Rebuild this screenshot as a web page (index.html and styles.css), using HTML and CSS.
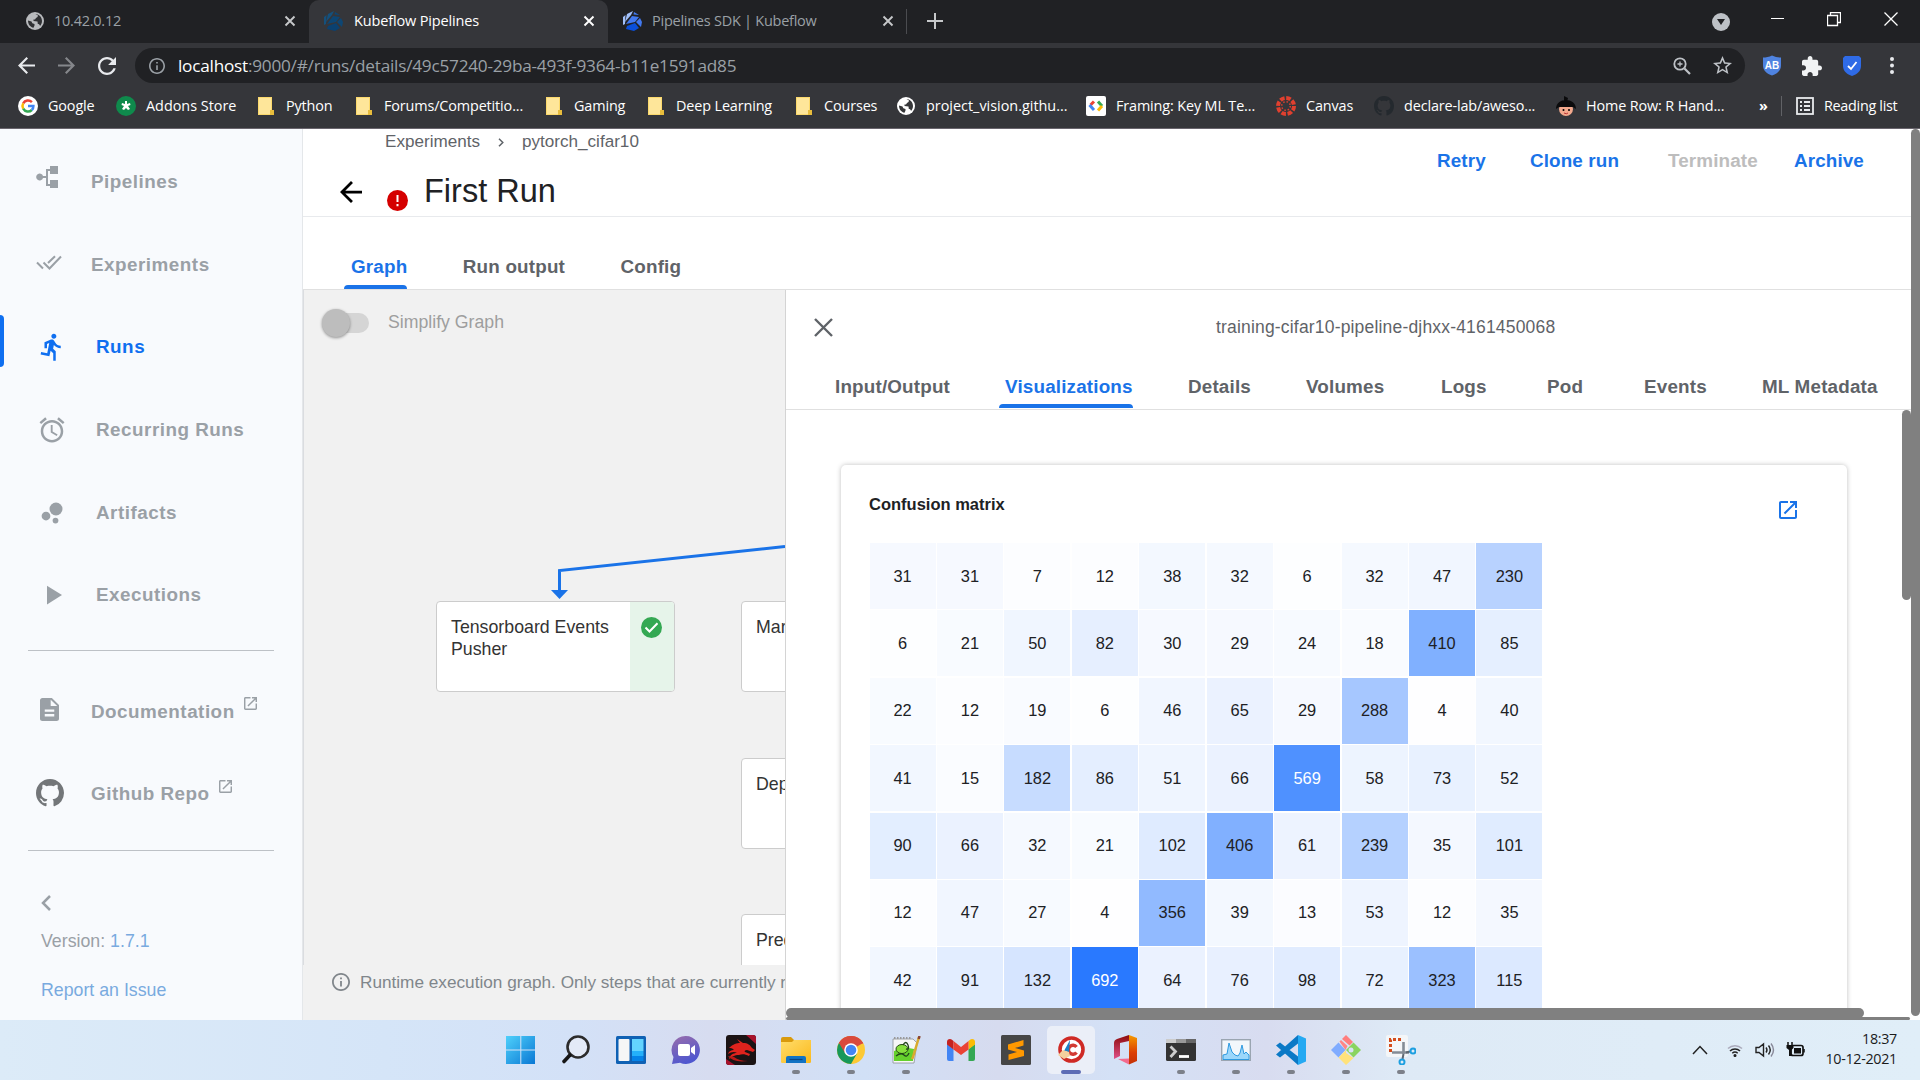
FILE: index.html
```html
<!DOCTYPE html>
<html lang="en">
<head>
<meta charset="utf-8">
<title>Kubeflow Pipelines</title>
<link rel="stylesheet" href="styles.css">
</head>
<body>
<svg class="defs" width="0" height="0">
  <defs>
    <symbol id="x" viewBox="0 0 12 12"><path d="M1.5 1.5l9 9M10.500 1.500l-9 9" fill="none" stroke="currentColor" stroke-width="1.900"/></symbol>
    <symbol id="globe" viewBox="0 0 18 18"><circle cx="9" cy="9" r="9" fill="currentColor"/><path d="M9.500 2c4 .3 6.500 3.500 6.500 7 0 2-.8 3.700-2 5-.3-1.500-1-2-2.200-2l-.3-2.500-4-.5 0-1.500h1.500L10 6l1.500-1L12 3.500zM2 8.500l3.500 1 .8 1.700 2.200.8v1.500l-1 2.300C4 15 2 12 2 8.500z" fill="#202124" opacity=".9"/></symbol>
    <symbol id="kf" viewBox="0 0 20 20"><path d="M5 3L11 0 9 4 3 11z" fill="var(--a)"/><path d="M1 6L3.500 4 3 13 1 14z" fill="var(--a)"/><path d="M10 5l7 1-4 5-9 2z" fill="var(--b)"/><path d="M12 1l5 3-5.500-.5zM18 7l2 4-1 5-5-5z" fill="var(--b)"/><path d="M13 12l4 5-5 3-8-2 1-3z" fill="var(--c)"/></symbol>
    <symbol id="folder" viewBox="0 0 16 18"><path d="M0 0h14v13l2 1v4H0z" fill="#fbd96c"/><path d="M1 1h12v16H1z" fill="#fee69a"/><path d="M12 13h4v5h-4z" fill="#e8bd3c"/></symbol>
    <symbol id="github" viewBox="0 0 16 16"><path fill="currentColor" d="M8 0C3.580 0 0 3.580 0 8c0 3.540 2.290 6.530 5.470 7.590.4.070.55-.17.55-.38 0-.19-.01-.82-.01-1.490-2.010.37-2.530-.49-2.690-.94-.09-.23-.48-.94-.82-1.130-.28-.15-.68-.52-.01-.53.63-.01 1.080.58 1.230.82.72 1.210 1.870.87 2.330.66.070-.52.28-.87.51-1.070-1.780-.2-3.640-.89-3.640-3.950 0-.87.31-1.590.82-2.150-.08-.2-.36-1.020.08-2.120 0 0 .67-.21 2.200.82.64-.18 1.320-.27 2-.27s1.360.09 2 .27c1.530-1.040 2.200-.82 2.200-.82.44 1.100.16 1.920.08 2.120.51.56.82 1.270.82 2.150 0 3.070-1.870 3.750-3.650 3.950.29.25.54.73.54 1.480 0 1.070-.01 1.930-.01 2.200 0 .21.15.46.55.38A8.010 8.010 0 0 0 16 8c0-4.420-3.580-8-8-8z"/></symbol>
    <symbol id="open" viewBox="3 3 18 18"><path fill="currentColor" d="M19 19H5V5h7V3H5c-1.110 0-2 .9-2 2v14c0 1.100.89 2 2 2h14c1.100 0 2-.9 2-2v-7h-2v7zM14 3v2h3.590l-9.830 9.830 1.410 1.410L19 6.410V10h2V3h-7z"/></symbol>
    <symbol id="back" viewBox="4 4 16 16"><path fill="currentColor" d="M20 11H7.830l5.590-5.590L12 4l-8 8 8 8 1.410-1.410L7.830 13H20v-2z"/></symbol>
    <symbol id="info" viewBox="2 2 20 20"><path fill="currentColor" d="M11 17h2v-6h-2v6zm1-15C6.480 2 2 6.480 2 12s4.480 10 10 10 10-4.480 10-10S17.520 2 12 2zm0 18c-4.410 0-8-3.590-8-8s3.590-8 8-8 8 3.590 8 8-3.590 8-8 8zM11 9h2V7h-2v2z"/></symbol>
    <symbol id="shield" viewBox="0 0 18 20"><path fill="currentColor" d="M9 0c3 1.500 6 2 9 2v8c0 5-4 8.500-9 10C4 18.500 0 15 0 10V2c3 0 6-.5 9-2z"/></symbol>
    <linearGradient id="gWin" x1="0" y1="0" x2="1" y2="1"><stop offset="0" stop-color="#4fd0fb"/><stop offset="1" stop-color="#0a78d4"/></linearGradient>
    <linearGradient id="gChat" x1="0" y1="0" x2=".4" y2="1"><stop offset="0" stop-color="#9a6dab"/><stop offset="1" stop-color="#4f57cf"/></linearGradient>
    <linearGradient id="gFold" x1="0" y1="0" x2="1" y2="1"><stop offset="0" stop-color="#ffdd6b"/><stop offset="1" stop-color="#fbb91c"/></linearGradient>
    <linearGradient id="gOff" x1="0" y1="0" x2="0" y2="1"><stop offset="0" stop-color="#f59a00"/><stop offset=".6" stop-color="#dc3f05"/><stop offset="1" stop-color="#c33106"/></linearGradient>
    <linearGradient id="gOff2" x1="0" y1="0" x2="0" y2="1"><stop offset="0" stop-color="#8d0a0a"/><stop offset="1" stop-color="#e0508a"/></linearGradient>
  </defs>
</svg>

<header class="browser">
  <div class="tabstrip">
    <div class="tab"><svg class="fav dim" width="18" height="18"><use href="#globe"/></svg><span class="tab-name">10.42.0.12</span><svg class="close" width="12" height="12"><use href="#x"/></svg></div>
    <div class="tab active"><svg class="fav kf-dark" width="20" height="20"><use href="#kf"/></svg><span class="tab-name">Kubeflow Pipelines</span><svg class="close" width="12" height="12"><use href="#x"/></svg></div>
    <div class="tab"><svg class="fav kf-blue" width="20" height="20"><use href="#kf"/></svg><span class="tab-name">Pipelines SDK | Kubeflow</span><svg class="close" width="12" height="12"><use href="#x"/></svg></div>
    <div class="tab-sep"></div>
    <svg class="new-tab" width="16" height="16" viewBox="0 0 16 16"><path d="M8 0v16M0 8h16" stroke="#c6c8ca" stroke-width="2"/></svg>
    <div class="window-controls">
      <svg width="18" height="18" viewBox="0 0 18 18"><circle cx="9" cy="9" r="9" fill="#bdc1c6"/><path d="M5 6h8l-4 6z" fill="#202124"/></svg>
      <svg width="13" height="18" viewBox="0 0 13 18"><path d="M0 6.500h13" stroke="#fff"/></svg>
      <svg width="14" height="18" viewBox="0 0 14 18"><path d="M.5 3.500h10v10H.5zM3.500 3V.5h10v10H11" fill="none" stroke="#fff" stroke-width="1.300"/></svg>
      <svg width="14" height="18" viewBox="0 0 14 18"><path d="M.5.5l13 13M13.500.5l-13 13" stroke="#fff" stroke-width="1.300"/></svg>
    </div>
  </div>
  <div class="toolbar">
    <svg class="nav-icon" width="17" height="17"><use href="#back"/></svg>
    <svg class="nav-icon fwd" width="17" height="17"><use href="#back"/></svg>
    <svg class="nav-icon" width="18" height="18" viewBox="4 4 16 16"><path fill="currentColor" d="M17.650 6.350C16.200 4.900 14.210 4 12 4c-4.420 0-7.990 3.580-7.990 8s3.570 8 7.990 8c3.730 0 6.840-2.550 7.730-6h-2.080c-.82 2.330-3.040 4-5.650 4-3.310 0-6-2.690-6-6s2.690-6 6-6c1.660 0 3.140.69 4.220 1.780L13 11h7V4l-2.350 2.350z"/></svg>
    <div class="omnibox">
      <svg class="site-info" width="16" height="16"><use href="#info"/></svg>
      <span class="url"><b>localhost</b>:9000/#/runs/details/49c57240-29ba-493f-9364-b11e1591ad85</span>
      <svg width="18" height="18" viewBox="0 0 18 18" fill="none" stroke="#bdc1c6"><circle cx="7" cy="7" r="5.700" stroke-width="1.800"/><path d="M11.500 11.500l5.500 5.500" stroke-width="2.200"/><path d="M7 4.500v5M4.500 7h5" stroke-width="1.300"/></svg>
      <svg width="19" height="19" viewBox="2 2 20 20"><path fill="#bdc1c6" d="M22 9.240l-7.190-.62L12 2 9.190 8.630 2 9.240l5.460 4.730L5.820 21 12 17.270 18.180 21l-1.630-7.030L22 9.240zM12 15.400l-3.760 2.270 1-4.280-3.320-2.880 4.380-.38L12 6.100l1.710 4.040 4.380.38-3.320 2.880 1 4.280L12 15.400z"/></svg>
    </div>
    <div class="extensions">
      <span class="ext-ab"><svg width="18" height="21"><use href="#shield"/></svg><em>AB</em></span>
      <svg width="20" height="20" viewBox="2 1 21 21"><path fill="#f1f3f4" d="M20.500 11H19V7c0-1.100-.9-2-2-2h-4V3.500C13 2.120 11.880 1 10.500 1S8 2.120 8 3.500V5H4c-1.100 0-1.990.9-1.990 2v3.800H3.500c1.490 0 2.700 1.210 2.700 2.700s-1.210 2.700-2.700 2.700H2V20c0 1.100.9 2 2 2h3.800v-1.500c0-1.490 1.210-2.700 2.700-2.700 1.490 0 2.700 1.210 2.700 2.700V22H17c1.100 0 2-.9 2-2v-4h1.500c1.380 0 2.500-1.120 2.500-2.500S21.880 11 20.500 11z"/></svg>
      <svg width="18" height="20" viewBox="0 0 18 20"><path d="M2 0h14l2 2v8c0 5-4 8.500-9 10C4 18.500 0 15 0 10V2z" fill="#2f6be6"/><path d="M5 10l3 3 5.500-7" fill="none" stroke="#fff" stroke-width="1.800"/></svg>
      <svg width="4" height="17" viewBox="0 0 4 17" fill="#e8eaed"><circle cx="2" cy="2" r="2"/><circle cx="2" cy="8.500" r="2"/><circle cx="2" cy="15" r="2"/></svg>
    </div>
  </div>
  <nav class="bookmarks">
    <a class="bm w98"><svg width="20" height="20" viewBox="0 0 20 20"><circle cx="10" cy="10" r="10" fill="#fff"/><g fill="none" stroke-width="2.500"><path d="M13.900 6.100A5.500 5.500 0 0 0 5.200 7.300" stroke="#ea4335"/><path d="M5.200 7.300a5.500 5.500 0 0 0 0 5.400" stroke="#fbbc05"/><path d="M5.200 12.700a5.500 5.500 0 0 0 8.600 1.300" stroke="#34a853"/><path d="M13.800 14a5.500 5.500 0 0 0 1.600-4H10" stroke="#4285f4"/></g></svg><span>Google</span></a>
    <a class="bm w140"><svg width="20" height="20" viewBox="0 0 20 20"><circle cx="10" cy="10" r="10" fill="#0f8a4c"/><path d="M9 5h2v3l3-1 .5 2-2.500 1 2 3-2 1-2-2-2 2-2-1 2-3-2.500-1L6 7l3 1z" fill="#fff"/></svg><span class="wide">Addons Store</span></a>
    <a class="bm w98"><svg width="20" height="18"><use href="#folder"/></svg><span>Python</span></a>
    <a class="bm w190"><svg width="20" height="18"><use href="#folder"/></svg><span>Forums/Competitio...</span></a>
    <a class="bm w102"><svg width="20" height="18"><use href="#folder"/></svg><span>Gaming</span></a>
    <a class="bm w148"><svg width="20" height="18"><use href="#folder"/></svg><span>Deep Learning</span></a>
    <a class="bm w102"><svg width="20" height="18"><use href="#folder"/></svg><span>Courses</span></a>
    <a class="bm w190"><svg class="white" width="20" height="18"><use href="#globe"/></svg><span class="wide">project_vision.githu...</span></a>
    <a class="bm w190"><svg width="20" height="20" viewBox="0 0 20 20"><rect width="20" height="20" rx="2" fill="#fff"/><g fill="none" stroke-width="3"><path d="M8 5.500L4.500 9" stroke="#ea4335"/><path d="M3.500 9L8 14" stroke="#4285f4"/><path d="M12 5.500L16 10" stroke="#34a853"/><path d="M16 10l-4 4.500" stroke="#fbbc05"/></g></svg><span>Framing: Key ML Te...</span></a>
    <a class="bm w98"><svg width="20" height="20" viewBox="0 0 20 20"><circle cx="10" cy="10" r="8" fill="none" stroke="#e0402f" stroke-width="4" stroke-dasharray="4.600 1.680"/><circle cx="10" cy="10" r="4.300" fill="none" stroke="#e0402f" stroke-width="1.500" stroke-dasharray="1.500 1.880"/></svg><span>Canvas</span></a>
    <a class="bm w182"><svg class="gh-dark" width="20" height="20"><use href="#github"/></svg><span>declare-lab/aweso...</span></a>
    <a class="bm w190"><svg width="20" height="20" viewBox="0 0 20 20"><circle cx="10" cy="13" r="7" fill="#f3a98d"/><path d="M0 13C0 7 5 4 10 4s10 3 10 9l-3-2H3zM8 0l4 2-1 4H8z" fill="#0b0b0c"/><circle cx="7.500" cy="14" r="1"/><circle cx="13" cy="14" r="1"/><path d="M8 17q2.500 1.500 4 0" stroke="#b33" fill="none"/></svg><span>Home Row: R Hand...</span></a>
    <span class="more">»</span>
    <span class="bm-sep"></span>
    <a class="bm reading"><svg width="18" height="18" viewBox="0 0 18 18"><rect x="1" y="1" width="16" height="16" fill="none" stroke="#e8eaed" stroke-width="1.800"/><path d="M4 5h2M4 9h2M4 13h2M8 5h6M8 9h6M8 13h6" stroke="#e8eaed" stroke-width="1.800"/></svg><span>Reading list</span></a>
  </nav>
</header>

<main class="app">
  <aside class="sidenav">
    <a class="item ext"><span class="ic"><svg class="up" width="22" height="23" viewBox="0 0 22 23"><path fill="currentColor" d="M14 0h8v8h-8V5h-2v13h2v-4h8v8h-8v-2h-4v-8H7a3.500 3.500 0 1 1 0-2h3V3h4z"/></svg></span>Pipelines</a>
    <a class="item ext"><span class="ic"><svg class="up2" width="26" height="15" viewBox="0 0 26 15" fill="none" stroke="currentColor" stroke-width="2"><path d="M1 7.500l6 6M7.500 7.500l6 6L25 1.500M12 8l7-6.800"/></svg></span>Experiments</a>
    <a class="item active"><span class="ic"><svg width="30" height="30" viewBox="0 0 24 24"><path fill="currentColor" d="M13.490 5.480c1.100 0 2-.9 2-2s-.9-2-2-2-2 .9-2 2 .9 2 2 2zm-3.600 13.900l1-4.400 2.100 2v6h2v-7.500l-2.100-2 .6-3c1.300 1.500 3.300 2.500 5.500 2.500v-2c-1.900 0-3.500-1-4.300-2.400l-1-1.600c-.4-.6-1-1-1.700-1-.3 0-.5.1-.8.1l-5.200 2.200v4.700h2v-3.400l1.800-.7-1.600 8.100-4.900-1-.4 2 7 1.400z"/></svg></span>Runs</a>
    <a class="item"><span class="ic"><svg width="30" height="30" viewBox="0 0 24 24"><path fill="currentColor" d="M22 5.720l-4.600-3.860-1.290 1.530 4.600 3.860L22 5.720zM7.880 3.390L6.600 1.860 2 5.710l1.290 1.530 4.590-3.850zM12.500 8H11v6l4.750 2.850.75-1.230-4-2.370V8zM12 4c-4.970 0-9 4.030-9 9s4.020 9 9 9c4.970 0 9-4.030 9-9s-4.030-9-9-9zm0 16c-3.870 0-7-3.130-7-7s3.130-7 7-7 7 3.130 7 7-3.130 7-7 7z"/></svg></span>Recurring Runs</a>
    <a class="item"><span class="ic"><svg width="30" height="30" viewBox="0 0 24 24" fill="currentColor"><circle cx="7.200" cy="14.400" r="3.500"/><circle cx="14.800" cy="18" r="2.300"/><circle cx="15.200" cy="8.800" r="5.200"/></svg></span>Artifacts</a>
    <a class="item"><span class="ic"><svg width="30" height="30" viewBox="0 0 24 24"><path fill="currentColor" d="M8 4.500v15l12-7.500z"/></svg></span>Executions</a>
    <hr>
    <a class="item ext"><span class="ic"><svg class="doc" width="19" height="23" viewBox="4 2 16 20" preserveAspectRatio="none"><path fill="currentColor" d="M14 2H6c-1.100 0-2 .9-2 2v16c0 1.100.89 2 2 2h12c1.100 0 2-.9 2-2V8l-6-6zm2 16H8v-2h8v2zm0-4H8v-2h8v2zm-3-5V3.500L18.500 9H13z"/></svg></span>Documentation<svg class="out" width="13" height="13"><use href="#open"/></svg></a>
    <a class="item ext"><span class="ic"><svg class="gh" width="28" height="28"><use href="#github"/></svg></span>Github Repo<svg class="out" width="13" height="13"><use href="#open"/></svg></a>
    <hr class="second">
    <svg class="chev" width="10" height="16" viewBox="0 0 10 16"><path d="M9 1L2 8l7 7" fill="none" stroke="currentColor" stroke-width="2.500"/></svg>
    <p class="foot">Version: <a>1.7.1</a></p>
    <p class="foot issue"><a>Report an Issue</a></p>
  </aside>

  <section class="page">
    <div class="page-head">
      <div class="head-left">
        <div class="crumbs"><span>Experiments</span><svg width="6" height="9" viewBox="0 0 6 9"><path d="M1 .7l3.800 3.800L1 8.300" fill="none" stroke="#5f6368" stroke-width="1.500"/></svg><span>pytorch_cifar10</span></div>
        <div class="title-row"><svg class="arrow" width="22" height="22"><use href="#back"/></svg><svg class="err" width="21" height="21" viewBox="0 0 21 21"><circle cx="10.500" cy="10.500" r="10.500" fill="#d50000"/><path d="M10.500 5v7M10.500 14v2.200" stroke="#fff" stroke-width="2"/></svg><h1>First Run</h1></div>
      </div>
      <div class="actions"><a>Retry</a><a>Clone run</a><a class="off">Terminate</a><a>Archive</a></div>
    </div>
    <div class="main-tabs"><a class="on">Graph</a><a>Run output</a><a>Config</a></div>
    <div class="work">
      <div class="graph">
        <div class="canvas">
          <svg class="edge" width="482" height="675" viewBox="0 0 482 675"><path d="M482 256.500L256.500 280.500V301" fill="none" stroke="#1a73e8" stroke-width="3"/><path d="M248 300h17l-8.500 9z" fill="#1a73e8"/></svg>
          <label class="switch"><i></i><span>Simplify Graph</span></label>
          <div class="node n1"><span>Tensorboard Events Pusher</span><b><svg width="21" height="21" viewBox="0 0 21 21"><circle cx="10.500" cy="10.500" r="10.500" fill="#34a853"/><path d="M4.500 10.500l4 4 8-8.300" fill="none" stroke="#fff" stroke-width="2"/></svg></b></div>
          <div class="node n2"><span>Mar</span></div>
          <div class="node n3"><span>Dep</span></div>
          <div class="node n4"><span>Pred</span></div>
        </div>
        <div class="status"><svg width="18" height="18"><use href="#info"/></svg><span>Runtime execution graph. Only steps that are currently r</span></div>
      </div>
      <div class="panel">
        <div class="panel-head"><svg width="19" height="19" viewBox="0 0 19 19"><path d="M1 1l17 17M18 1L1 18" stroke="#5f6368" stroke-width="2.400"/></svg><span>training-cifar10-pipeline-djhxx-4161450068</span></div>
        <div class="panel-tabs"><a>Input/Output</a><a class="on">Visualizations</a><a>Details</a><a>Volumes</a><a>Logs</a><a>Pod</a><a>Events</a><a>ML Metadata</a></div>
        <div class="panel-body">
          <div class="card">
            <div class="card-head"><h2>Confusion matrix</h2><svg width="18" height="18"><use href="#open"/></svg></div>
            <div class="matrix" id="matrix"></div>
          </div>
        </div>
        <div class="bar inner-v"></div>
        <div class="bar inner-h"></div>
      </div>
    </div>
  </section>
  <div class="bar outer-v"></div>
  <div class="bar outer-h"></div>
</main>

<footer class="taskbar">
  <div class="apps">
    <span class="app-ic"><svg width="30" height="30" viewBox="0 0 30 30" fill="url(#gWin)"><path d="M0 1h14.300v13.600H0zM15.300 1H29v13.600H15.300zM0 15.600h14.300V29H0zM15.300 15.600H29V29H15.300z"/></svg></span>
    <span class="app-ic"><svg width="30" height="30" viewBox="0 0 30 30"><circle cx="17" cy="12" r="10.500" fill="#e3eaf7" stroke="#2b2b2b" stroke-width="2.600"/><path d="M9 20l-6 6.500" stroke="#161616" stroke-width="3.600" stroke-linecap="round"/></svg></span>
    <span class="app-ic"><svg width="30" height="28" viewBox="0 0 30 28"><rect width="30" height="28" rx="1.500" fill="#0f61b4"/><rect x="2.500" y="3" width="11" height="22" rx="1" fill="#f6f6f6"/><path d="M16 3h11.500v12H16z" fill="#63d4ff"/><path d="M16 15h11.500v5H16z" fill="#24b0fa"/><path d="M16 20h11.500v5H16z" fill="#0583e8"/></svg></span>
    <span class="app-ic"><svg width="30" height="30" viewBox="0 0 30 30"><path d="M15 1a14 14 0 1 1-6 26.700L1 29l1.500-7A14 14 0 0 1 15 1z" fill="url(#gChat)"/><rect x="7" y="9" width="12" height="12" rx="2" fill="#fff"/><path d="M20 13l4-3v10l-4-3z" fill="#fff"/></svg></span>
    <span class="app-ic"><svg width="30" height="30" viewBox="0 0 30 30"><rect width="30" height="30" rx="3" fill="#1b1314"/><path d="M20 0h7q3 0 3 3v6zM0 24v3q0 3 3 3h6z" fill="#a8122c"/><path d="M3 13c4-4 8-5 11-5l-3-4 6 4c5 0 7 2 9 5l3 2-2 2-6-2c-2 0-3 1-2 2l5 2-1 2c-4-2-7-2-10-1-5 0-7 2-10 4 1-4 4-6 8-6-3-2-6-1-9 1 1-3 3-4 6-4-2-2-3-2-5-2z" fill="#e0231d"/><path d="M2 21q5 7 20 5-9 0-14-4" fill="#b81a18"/></svg></span>
    <span class="app-ic run"><svg width="30" height="28" viewBox="0 0 30 28"><path d="M0 3q0-2 2-2h8l3 3v5H0z" fill="#d99a0c"/><path d="M0 6h11l2-2h17v22q0 1-1.500 1H1.500Q0 27 0 26z" fill="url(#gFold)"/><path d="M5 27v-5q0-2 2-2h16q2 0 2 2v5z" fill="#1273c4"/><path d="M8.500 23.500h13" stroke="#0b4583" stroke-width="1.200"/></svg></span>
    <span class="app-ic run"><svg width="28" height="28" viewBox="0 0 28 28"><circle cx="14" cy="14" r="14" fill="#fcc934"/><path d="M14 14L1.900 7A14 14 0 0 1 26.100 7z" fill="#d94a3d"/><path d="M14 14l-6.200-3.500L1.900 7A14 14 0 0 0 14 28l6-10.500z" fill="#17985a"/><path d="M14 7.500h12.400A14 14 0 0 0 1.900 7L8 17z" fill="#d94a3d"/><circle cx="14" cy="14" r="6.800" fill="#fff"/><circle cx="14" cy="14" r="5.300" fill="#4286f4"/></svg></span>
    <span class="app-ic run"><svg width="30" height="28" viewBox="0 0 30 28"><path d="M2 3h20l4 4-3 20H2z" fill="#f7f7f7" stroke="#8b8f94" stroke-width=".8"/><path d="M3 2h18" stroke="#9a9a9a" stroke-width="2" stroke-dasharray="1.500 1.500"/><path d="M3 15q9-5 20-2l-1 12H3z" fill="#65d12d"/><ellipse cx="11" cy="13" rx="6" ry="4.500" fill="#86df3d" stroke="#274916"/><path d="M5 20q5-4 8-1t5-2M12 9q3-5 5 0t-2 4" fill="none" stroke="#22431a" stroke-width="1.300"/><path d="M28 1l-6 20-1 2" stroke="#d9aa2d" stroke-width="2.500"/><path d="M28.500 0l-.8 3" stroke="#8b4432" stroke-width="2.500"/></svg></span>
    <span class="app-ic"><svg width="28" height="22" viewBox="0 0 28 22"><path d="M0 5l6.500 5v12H2q-2 0-2-2z" fill="#4285f4"/><path d="M21.500 10L28 5v15q0 2-2 2h-4.500z" fill="#34a853"/><path d="M0 5V3Q0 0 3 0q1.500 0 3.500 2v8.500L0 5.500z" fill="#c5221f"/><path d="M28 5V3q0-3-3-3-1.500 0-3.500 2v8.500L28 5.500z" fill="#fbbc04"/><path d="M6.500 2l7.500 6 7.500-6v8.500L14 16l-7.500-5.500z" fill="#ea4335"/></svg></span>
    <span class="app-ic"><svg width="30" height="30" viewBox="0 0 30 30"><rect width="30" height="30" rx="1.500" fill="#464646"/><path d="M7 9.500L22.500 5v5.500L14 13l9 2.500V21L7.500 25v-5.500l8.500-2.500-9-2.500z" fill="#ff9800"/></svg></span>
    <span class="app-ic current"><svg width="27" height="27" viewBox="0 0 27 27"><circle cx="13.500" cy="13.500" r="11.500" fill="#fff" stroke="#cf2a25" stroke-width="3.600"/><path d="M18.500 11a4.500 4.500 0 1 0 0 5.500" fill="none" stroke="#d23a33" stroke-width="3.400"/><path d="M12 4L6 15l5 1z" fill="#1c7fc7"/><path d="M5 14l6 2 1 4-6 3-6-4z" fill="#f4cf9d"/></svg></span>
    <span class="app-ic"><svg width="24" height="30" viewBox="0 0 24 30"><path d="M15 0l8 3v23l-8 3.500z" fill="url(#gOff)"/><path d="M15 0v6L6 8v13l-6 3V8q0-3 3-4z" fill="url(#gOff2)"/><path d="M4 24l11-.5v6z" fill="#f36b8e"/></svg></span>
    <span class="app-ic run"><svg width="30" height="22" viewBox="0 0 30 22"><rect width="30" height="22" rx="1.500" fill="#333"/><path d="M0 0h10v4H0z" fill="#ccc"/><path d="M10 0h10v4H10z" fill="#999"/><path d="M20 0h10v4H20z" fill="#666"/><path d="M4.500 7.500l5 5-5 5.500" fill="none" stroke="#ccc" stroke-width="2.800"/><path d="M13 17.500h10" stroke="#fff" stroke-width="2.800"/></svg></span>
    <span class="app-ic run"><svg width="30" height="22" viewBox="0 0 30 22"><rect x=".7" y=".7" width="28.600" height="20.600" fill="#f2f7fb" stroke="#9aa5b1" stroke-width="1.400"/><path d="M2 16l4-1 2-11 3 9 3 3 3 1 2-3 2-8 2 9 2-2 3 3v4.500H2z" fill="#9bd7fb" stroke="#2e9ae0"/></svg></span>
    <span class="app-ic run"><svg width="30" height="30" viewBox="0 0 30 30"><path d="M22 0l8 3.500v23L22 30z" fill="#25a9f2"/><path d="M22 0v8.500L4 22.500 0 19.500zM0 10.500l4-3L22 21.500V30z" fill="#0b79c6"/></svg></span>
    <span class="app-ic run"><svg width="30" height="30" viewBox="0 0 30 30"><path d="M15 0l7 7-3.500 3.500L11 4z" fill="#ff7d7d"/><path d="M10 5l6.500 6-2 4-6-8.500z" fill="#ff8585"/><path d="M7.500 7.500l7 7.500-7 7.500L0 15z" fill="#80acff"/><path d="M22.500 7.500L30 15l-7.500 7.500L15 15z" fill="#8ad45f"/><circle cx="20" cy="15" r="2.500" fill="#d8e2f5"/><path d="M15 15v15l-7.500-7.500zM15 18l7.500 5L15 30z" fill="#ffe27b"/></svg></span>
    <span class="app-ic run"><svg width="30" height="30" viewBox="0 0 30 30"><rect width="22" height="22" rx="2" fill="#f4f6f8"/><path d="M4.500 17V4.500H17" fill="none" stroke="#d44c1b" stroke-width="3" stroke-dasharray="3 2"/><path d="M17.500 7v12M6 17.500h17" stroke="#848c95" stroke-width="2.600" fill="none"/><path d="M17.500 19l-1 5M20 17.500l4-1" stroke="#5d6670" stroke-width="2"/><circle cx="16" cy="27" r="2.500" fill="none" stroke="#1d9fe0" stroke-width="2"/><circle cx="27" cy="16" r="2.500" fill="none" stroke="#1d9fe0" stroke-width="2"/></svg></span>
  </div>
  <div class="tray">
    <svg width="16" height="10" viewBox="0 0 16 10"><path d="M1 9l7-7.500L15 9" fill="none" stroke="#222" stroke-width="1.500"/></svg>
    <svg class="wifi" width="16" height="14" viewBox="0 0 16 14" fill="none" stroke="#222" stroke-width="1.500"><path d="M1 5.500a10 10 0 0 1 14 0" stroke="#aab"/><path d="M3 8a7 7 0 0 1 10 0M5.300 10.300a4 4 0 0 1 5.400 0"/><circle cx="8" cy="12.500" r=".8" fill="#222"/></svg>
    <svg class="vol" width="20" height="16" viewBox="0 0 20 16" fill="none" stroke="#222" stroke-width="1.400"><path d="M1 5.500h3L8.500 2v12L4 10.500H1zM11 5.500q2 2.500 0 5M13.500 3.500q3.500 4.500 0 9"/><path d="M16 1.500q5 6.500 0 13" stroke="#889"/></svg>
    <svg class="bat" width="20" height="16" viewBox="0 0 20 16"><rect x="5" y="3.500" width="12" height="10" rx="2" fill="none" stroke="#111" stroke-width="1.700"/><path d="M8 6h7v5.500H8z" fill="#111"/><path d="M18 7v3.500M2 0v4M6 0v4" stroke="#111" stroke-width="1.500"/><path d="M.5 3h7v3L5.500 8v6H3V8L.5 6z" fill="#111"/></svg>
    <div class="clock"><span>18:37</span><span>10-12-2021</span></div>
  </div>
</footer>
<script src="matrix.js"></script>
</body>
</html>
```
FILE: styles.css
```css
* { box-sizing: border-box; }
html, body { margin: 0; width: 1920px; height: 1080px; overflow: hidden; }
body { display: flex; flex-direction: column; font-family: "Liberation Sans", Arial, sans-serif; background: #fff; color: #202124; }
svg { display: block; flex: none; }
.defs { position: absolute; }

/* browser chrome */
.browser { height: 129px; flex: none; background: #35363a; border-bottom: 1px solid #69656d; font-family: "Open Sans", "Noto Sans", sans-serif; }
.tabstrip { height: 43px; background: #202124; display: flex; align-items: center; padding-left: 12px; }
.tab { width: 299px; height: 43px; display: flex; align-items: center; padding: 0 13px 1px 14px; color: #9aa0a6; font-size: 14.500px; letter-spacing: -.25px; }
.tab .fav { margin-right: 10px; }
.tab-name { flex: 1; white-space: nowrap; padding-bottom: 2px; }
.tab .close { color: #c6c8ca; }
.tab.active { background: #35363a; color: #fff; border-radius: 10px 10px 0 0; letter-spacing: -.15px; }
.tab.active .fav { margin-right: 11px; }
.tab:first-child { width: 297px; }
.tab.active .close { color: #fff; }
.dim { color: #b8babd; }
.kf-dark { --a: #14507c; --b: #0d4674; --c: #0b4170; }
.kf-blue { --a: #a1c0fa; --b: #4279f0; --c: #0b4fd8; }
.tab-sep { width: 1px; height: 25px; background: #4b4c50; margin-right: 20px; margin-left: -1px; }
.new-tab { margin-bottom: 1px; }
.window-controls { margin-left: auto; display: flex; align-items: center; padding: 0 22px 2px 0; }
.window-controls svg + svg { margin-left: 43px; }
.window-controls svg:nth-child(2) { margin-left: 41px; }
.window-controls svg:first-child { position: relative; top: 1px; }
.toolbar { height: 45px; display: flex; align-items: center; padding-left: 18px; color: #e8eaed; }
.nav-icon { margin-right: 23px; }
.nav-icon.fwd { transform: scaleX(-1); color: #85878b; }
.nav-icon:nth-child(3) { margin-right: 19px; }
.omnibox { width: 1610px; height: 35px; border-radius: 18px; background: #202124; display: flex; align-items: center; padding: 0 13px 0 14px; }
.site-info { color: #9aa0a6; margin-right: 13px; }
.url { flex: 1; color: #9aa0a6; font-size: 17.200px; letter-spacing: -.23px; white-space: nowrap; }
.url b { color: #fff; font-weight: 400; }
.omnibox svg:last-child { margin-left: 22px; }
.extensions { display: flex; align-items: center; margin-left: 18px; gap: 21px; }
.ext-ab { position: relative; color: #4f83e0; }
.ext-ab em { position: absolute; inset: 5px 0 auto; text-align: center; font: 700 10px "Liberation Sans", sans-serif; color: #fff; letter-spacing: 0; }
.extensions svg:last-child { margin-left: 8px; }
.bookmarks { height: 35px; display: flex; align-items: center; padding-left: 18px; color: #fff; font-size: 14.400px; letter-spacing: -.13px; }
.bm { display: flex; align-items: center; gap: 10px; white-space: nowrap; flex: none; }
.bm span { padding-bottom: 1px; }
.bm .wide { letter-spacing: 0; }
.reading { letter-spacing: -.3px; }
.w98 { width: 98px; } .w102 { width: 102px; } .w140 { width: 140px; } .w148 { width: 148px; } .w182 { width: 182px; } .w190 { width: 190px; }
.white { color: #fff; }
.gh-dark { color: #24292e; }
.more { width: 35px; padding-left: 13px; font-weight: 700; }
.bm-sep { width: 1px; height: 20px; background: #616266; margin-right: 14px; }

/* side navigation */
.app { position: relative; height: 891px; display: flex; flex: none; }
.sidenav { width: 303px; background: #f8fafd; border-right: 1px solid #e4e7ea; padding-top: 12px; color: #9aa0a6; }
.item { height: 82.600px; display: flex; align-items: center; font-weight: 700; font-size: 18.850px; letter-spacing: .5px; position: relative; }
.ic { width: 96px; padding-left: 37px; flex: none; }
.item.ext .ic { width: 91px; padding-left: 36px; }
.up { margin-bottom: 9px; }
.up2 { margin-bottom: 4px; }
.item.active { color: #0f6ff0; }
.item.active::before { content: ""; position: absolute; left: 0; top: 9px; width: 4px; height: 52px; background: #0f6ff0; border-radius: 0 4px 4px 0; }
.sidenav hr { margin: 13px 28px 20px; border: 0; height: 1px; background: #bdc1c6; }
.sidenav hr.second { margin: 14px 28px 44px; }
.doc { margin: 0 0 4px 4px; }
.gh { color: #737679; margin-bottom: 3px; }
.out { margin: 0 0 16px 9px; }
.chev { margin: 0 0 0 41px; }
.foot { margin: 20px 0 0 41px; font-size: 17.750px; line-height: 20px; }
.foot a { color: #79aadf; }
.foot.issue { margin-top: 29px; }

/* run page */
.page { flex: 1; display: flex; flex-direction: column; min-width: 0; }
.page-head { height: 88px; border-bottom: 1px solid #e8eaed; display: flex; width: 1608px; }
.head-left { flex: 1; }
.crumbs { display: flex; align-items: center; padding-left: 82px; color: #5f6368; font-size: 17.100px; line-height: 20px; margin-top: 3px; }
.crumbs svg { margin: 1px 18px 0 18px; }
.title-row { display: flex; align-items: center; padding-left: 37px; height: 60px; margin-top: 6px; color: #000; }
.title-row .arrow { margin-top: 8px; }
.err { margin: 25px 0 0 25px; }
h1 { margin: 6px 0 0 16px; font-weight: 400; font-size: 32.500px; line-height: 40px; color: #202124; }
.actions { display: flex; font-weight: 700; font-size: 18.850px; letter-spacing: .12px; color: #1a73e8; padding-top: 21px; width: 474px; line-height: 22px; }
.actions a:nth-child(1) { width: 93px; } .actions a:nth-child(2) { width: 138px; } .actions a:nth-child(3) { width: 126px; }
.actions .off { color: #bdbdbd; }
.main-tabs { height: 73px; border-bottom: 1px solid #e0e0e0; display: flex; padding-left: 41px; width: 1608px; align-items: flex-end; gap: 48.500px; }
.main-tabs a, .panel-tabs a { font-weight: 700; font-size: 18.850px; letter-spacing: .17px; color: #5f6368; position: relative; white-space: nowrap; }
.main-tabs a { padding: 0 0 12px 7px; line-height: 21px; }
a.on { color: #1a73e8 !important; }
a.on::after { content: ""; position: absolute; left: 0; right: 0; bottom: 0; height: 4px; background: #1a73e8; border-radius: 4px 4px 0 0; }
.work { flex: 1; display: flex; min-height: 0; }
.graph { width: 482px; background: #f1f1f1; overflow: hidden; flex: none; }
.canvas { height: 675px; border-left: 1px solid #dadce0; position: relative; overflow: hidden; }
.edge { position: absolute; left: -1px; top: 0; }
.switch { display: flex; align-items: center; padding: 21px 0 0 22px; color: #9e9e9e; font-size: 17.700px; height: 43px; }
.switch i { width: 43px; height: 20px; border-radius: 10px; background: #d5d5d5; position: relative; margin: 2px 19px 0 0; }
.switch i::before { content: ""; position: absolute; left: -4px; top: -4px; width: 28px; height: 28px; border-radius: 50%; background: #bdbdbd; box-shadow: 0 1px 3px rgba(0,0,0,.4); }
.node { position: absolute; width: 239px; height: 91px; border: 1px solid #ccc; border-radius: 4px; background: #fff; display: flex; font-size: 17.750px; line-height: 22px; color: #333; overflow: hidden; }
.node span { width: 193px; padding: 14px 0 0 14px; flex: none; }
.node b { flex: 1; background: #e6f4ea; padding: 15px 0 0 11px; }
.n1 { left: 132px; top: 311px; }
.n2 { left: 437px; top: 311px; }
.n3 { left: 437px; top: 468px; }
.n4 { left: 437px; top: 624px; }
.n2 b, .n3 b, .n4 b { display: none; }
.status { display: flex; align-items: center; padding-left: 29px; height: 34px; gap: 10px; color: #80868b; font-size: 17.200px; white-space: nowrap; }
.panel { flex: none; width: 1126px; border-left: 1px solid #d4d4d4; position: relative; display: flex; flex-direction: column; background: #fff; overflow: hidden; }
.panel-head { height: 74px; flex: none; display: flex; align-items: center; padding-left: 28px; color: #5f6368; font-size: 17.500px; letter-spacing: .18px; }
.panel-head span { margin-left: 383px; }
.panel-tabs { height: 46px; flex: none; border-bottom: 1px solid #e0e0e0; display: grid; grid-template-columns: 164px 189px 118px 135px 106px 97px 118px 1fr; padding-left: 49px; }
.panel-tabs a { justify-self: start; padding: 12px 0 0; line-height: 22px; height: 44px; }
.panel-tabs a.on { padding-left: 6px; }
.panel-body { flex: 1; min-height: 0; overflow: hidden; padding: 55px 0 0 55px; }
.card { width: 1006px; height: 900px; border-radius: 5px; box-shadow: 0 0 5px rgba(0,0,0,.25); padding: 29px 50px 0 28px; }
.card-head { display: flex; justify-content: space-between; }
.card-head svg { margin-top: 7px; color: #1a73e8; }
h2 { margin: 0; font-size: 16.500px; line-height: 20px; }
.matrix { display: grid; grid-template-columns: repeat(10, 66px); grid-auto-rows: 66px; gap: 1.400px 1.440px; margin: 24px 0 0 .5px; }
.matrix span { display: flex; align-items: center; justify-content: center; font-size: 16.400px; color: #202124; }
.matrix .lt { color: #fff; }
.bar { position: absolute; background: #808080; border-radius: 5px; }
.inner-v { width: 9px; height: 190px; right: 0; top: 120px; }
.inner-h { left: 0; width: 1078px; height: 10px; bottom: 2px; }
.outer-v { right: 0; top: 0; width: 9px; height: 887px; }
.outer-h { left: 786px; width: 1124px; bottom: 0; height: 3px; }

/* desktop taskbar */
.taskbar { height: 60px; flex: none; display: flex; justify-content: space-between; background: linear-gradient(90deg, #dcebf8 0, #d5e5f8 20%, #d3e1f7 30%, #d7dcf0 37%, #d1e0f6 45%, #d6dbef 52%, #d4e1f6 58%, #d8dcf0 66%, #deeaf6 73%, #e0eef8 100%); }
.apps { display: flex; padding-left: 494px; gap: 1px; align-items: center; padding-bottom: 1px; }
.app-ic { width: 54px; height: 60px; display: flex; align-items: center; justify-content: center; position: relative; }
.current::before { content: ""; position: absolute; left: 3px; top: 6px; width: 48px; height: 48px; border-radius: 5px; background: #ebeff8; }
.app-ic svg { position: relative; }
.run::after, .current::after { content: ""; position: absolute; left: 23px; top: 50px; width: 8px; height: 4px; border-radius: 2px; background: #7c8089; }
.current::after { left: 17px; width: 20px; background: #5d6cb5; }
.tray { display: flex; align-items: center; padding-right: 23px; }
.tray .wifi { margin-left: 19px; }
.tray .vol { margin-left: 12px; }
.tray .bat { margin-left: 11px; }
.clock { width: 91px; display: flex; flex-direction: column; align-items: flex-end; font: 14.300px/20px "Open Sans", sans-serif; letter-spacing: -.3px; color: #1b1b1b; padding-bottom: 2px; }
```
FILE: matrix.js
```javascript
const rows = [
  [31, 31, 7, 12, 38, 32, 6, 32, 47, 230],
  [6, 21, 50, 82, 30, 29, 24, 18, 410, 85],
  [22, 12, 19, 6, 46, 65, 29, 288, 4, 40],
  [41, 15, 182, 86, 51, 66, 569, 58, 73, 52],
  [90, 66, 32, 21, 102, 406, 61, 239, 35, 101],
  [12, 47, 27, 4, 356, 39, 13, 53, 12, 35],
  [42, 91, 132, 692, 64, 76, 98, 72, 323, 115]
];
const max = 692;
const matrix = document.getElementById('matrix');
rows.flat().forEach(v => {
  const cell = document.createElement('span');
  cell.textContent = v;
  cell.style.background = `rgba(41, 121, 255, ${v / max})`;
  if (v / max > 0.6) cell.className = 'lt';
  matrix.appendChild(cell);
});
```
